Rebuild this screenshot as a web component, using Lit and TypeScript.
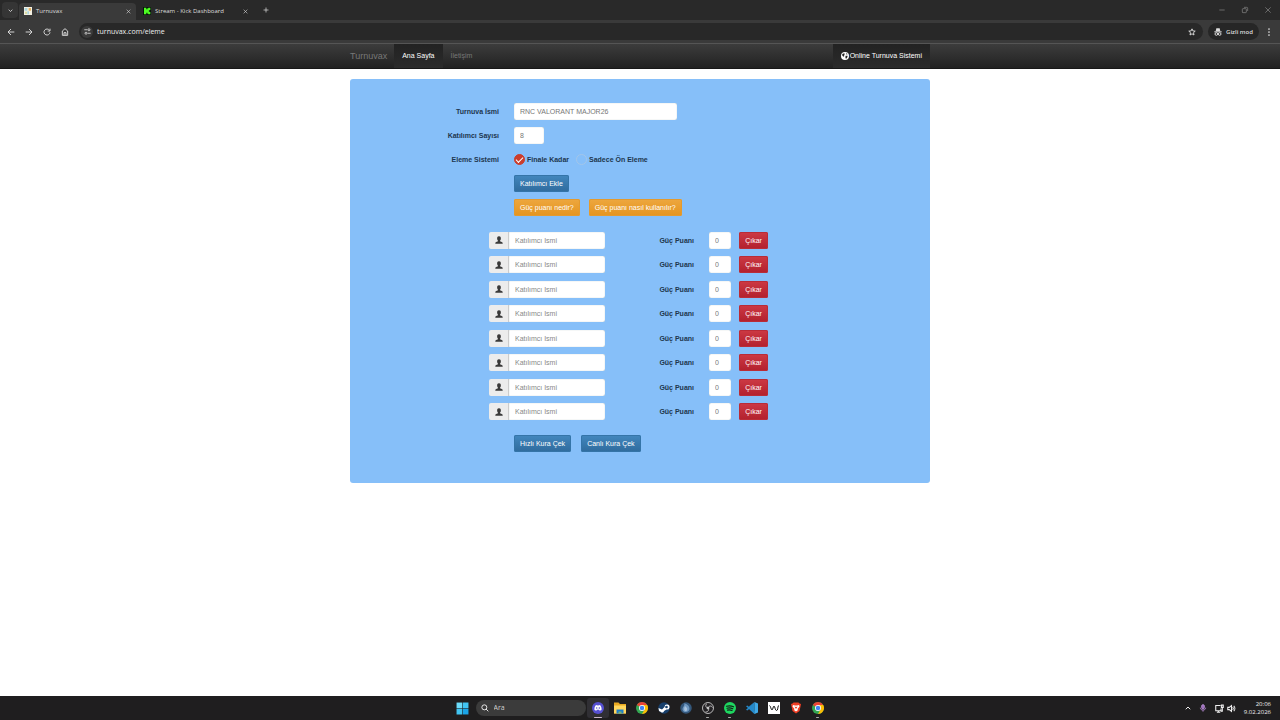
import { LitElement, html, css, svg } from "lit";
import { customElement, state } from "lit/decorators.js";

const icon = (body: unknown, size = 10, box = 24) =>
  html`<svg width=${size} height=${size} viewBox="0 0 ${box} ${box}" fill="none" stroke="currentColor" stroke-width="2.8" aria-hidden="true">${body}</svg>`;

const cross = svg`<path d="M3 3l18 18M21 3L3 21"/>`;
const thinCross = svg`<path stroke-width="2" d="M4 4l16 16M20 4L4 20"/>`;
const chevronDown = svg`<path stroke-width="4" d="M3 8l9 9 9-9"/>`;
const chevronUp = svg`<path stroke-width="4" d="M3 17l9-9 9 9"/>`;
const plus = svg`<path d="M12 2v20M2 12h20"/>`;
const back = svg`<path d="M22 12H4M12 3l-9 9 9 9"/>`;
const forward = svg`<path d="M2 12h18M12 3l9 9-9 9"/>`;
const reload = svg`<path d="M19.500 7a9 9 0 1 0 1.500 6M21 2v7h-7"/>`;
const home = svg`<path d="M4 9l8-7 8 7v13H4zM9 22v-8h6v8"/>`;
const tune = svg`<path d="M1 6h10M13 18h10"/><circle cx="17" cy="6" r="3.500"/><circle cx="7" cy="18" r="3.500"/>`;
const star = svg`<path d="M12 2.500l2.700 6.300 7 .6-5.300 4.600 1.600 7L12 17.300 6 21l1.600-7-5.300-4.600 7-.6z"/>`;
const incognito = svg`<g fill="currentColor" stroke="none"><path d="M7 1h10l2 9H5z"/><path d="M1 10h22v3H1z"/></g><circle cx="7" cy="18" r="4"/><circle cx="17" cy="18" r="4"/>`;
const dots = svg`<g fill="currentColor" stroke="none"><circle cx="12" cy="3" r="2.600"/><circle cx="12" cy="12" r="2.600"/><circle cx="12" cy="21" r="2.600"/></g>`;
const minimise = svg`<path stroke-width="2" d="M4 12h16"/>`;
const restore = svg`<rect stroke-width="2" x="4" y="8" width="12" height="12" rx="2"/><path stroke-width="2" d="M9 4h8a3 3 0 0 1 3 3v8"/>`;
const globe = svg`<circle cx="12" cy="12" r="12" fill="#fff" stroke="none"/><path d="M5 5c3 0 5-1 7 1l-3 3 1 3-3 2-4-5zM14 11l6 0-1 5-4 5-2-5zM15 3l5 3-3 2z" fill="#222" stroke="none"/>`;
const person = svg`<path d="M12 1c-5 0-6 4-5.500 8 .4 3 2 4 2.500 6-.3 2-7 2-8 5.500V23h22v-2.500c-1-3.500-7.700-3.500-8-5.500.5-2 2.100-3 2.500-6C18 5 17 1 12 1z" fill="#3a3a3a" stroke="none"/>`;
const search = svg`<circle cx="10" cy="10" r="7.500"/><path d="M15 15l7 7"/>`;
const mic = svg`<rect x="8" y="2" width="8" height="13" rx="4" fill="#9b6bbd" stroke="#b48ccc"/><path d="M4 11c0 10 16 10 16 0M12 19v4" stroke="#a97fc4"/>`;
const network = svg`<path d="M15 4H2v14h14v-6M5 22h9M9 18v4"/><path d="M17 3h5v6h-5zM19.500 9v10h-4"/>`;
const speaker = svg`<path d="M2 9v6h4l6 5V4L6 9z"/><path d="M15 8c2 2 2 6 0 8M18 5c4 4 4 10 0 14"/>`;

const favTurnuvax = svg`<g stroke="none"><path fill="#f3efe2" d="M0 0h24v24H0z"/><path fill="#a9d6df" d="M2 3h8v8H2zM10 13h5v9h-5z"/><path fill="#e8b35c" d="M14 3h7v8h-7z"/><path fill="#d9dca0" d="M3 14h6v7H3z"/></g>`;
const favKick = svg`<g stroke="none"><path fill="#06140a" d="M0 0h24v24H0z"/><path fill="#4dfb22" d="M3 2h7v5h3V4h3V2h6v7h-3v2h-2v2h2v2h3v7h-6v-2h-3v-3h-3v5H3z"/></g>`;

const windows = svg`<g stroke="none" fill="#41c4f2"><path d="M1 1h10.500v10.500H1z" fill="#6cdcfa"/><path d="M12.500 1H23v10.500H12.500zM1 12.500h10.500V23H1z"/><path d="M12.500 12.500H23V23H12.500z" fill="#1ba5e8"/></g>`;
const discord = svg`<g stroke="none"><circle cx="12" cy="12" r="12" fill="#5650d2"/><path fill="#fff" d="M7 7l3-1 .7 1h2.600L14 6l3 1c2 3 2.500 6 2 9l-3.500 1.500-1.300-2h-4.400l-1.300 2L5 16c-.5-3 0-6 2-9z"/><circle cx="9.400" cy="12" r="1.500" fill="#5650d2"/><circle cx="14.600" cy="12" r="1.500" fill="#5650d2"/></g>`;
const folder = svg`<g stroke="none"><path fill="#e9a921" d="M0 1h9l3 3h12v19H0z"/><path fill="#ffd75e" d="M0 7h24v16H0z"/><path fill="#1f7fc9" d="M5 23v-8h14v8z"/><path fill="#7fb46a" d="M9 19h6v4H9z"/></g>`;
const chrome = svg`<g stroke="none"><circle cx="12" cy="12" r="12" fill="#34a853"/><path fill="#ea4335" d="M12 12L1.600 6A12 12 0 0 1 22.400 6H12z"/><path fill="#fbbc04" d="M12 12V6h10.400A12 12 0 0 1 12 24l5.200-9z"/><circle cx="12" cy="12" r="6" fill="#fff"/><circle cx="12" cy="12" r="4.500" fill="#4285f4"/></g>`;
const steam = svg`<g stroke="none"><circle cx="12" cy="12" r="11.500" fill="#173f6b"/><path fill="#fff" d="M1 12l7 3 5-5a5 5 0 1 1 4 5l-5 3a3.500 3.500 0 0 1-6 2l-4-2z"/><circle cx="17" cy="10" r="2.700" fill="#173f6b"/></g>`;
const flame = svg`<g stroke="none"><circle cx="12" cy="12" r="11.500" fill="#34587c"/><path fill="#6f98c2" d="M9 2c3 3 10 3 10 12-1 8-13 8-14 1 0-5 4-6 4-13z"/><path fill="#a9c3dd" d="M10 8c4 3 6 6 3 10-5 1-6-4-3-10z"/></g>`;
const obs = svg`<g stroke="#c8c8c8" stroke-width="1.800"><circle cx="12" cy="12" r="11" fill="#252326"/><path d="M12 12c-5-1-6-6-2-9M12 12c2-5 7-5 9-1M12 12c3 4 0 8-5 8"/><circle cx="12" cy="12" r="2" fill="#c8c8c8"/></g>`;
const spotify = svg`<circle cx="12" cy="12" r="12" fill="#1ed760" stroke="none"/><path stroke="#142018" stroke-width="2.400" stroke-linecap="round" d="M5 8.500c5-1.500 10-1 14 1M6 12.500c4-1.200 8-.8 11.500 1M7 16.200c3-.9 6-.6 9 .9"/>`;
const vscode = svg`<g stroke="none"><path fill="#2489ca" d="M17 0L6.500 10 2.500 7 0 8.500 13 20l4 4v-6L5 9.500z"/><path fill="#2489ca" d="M17 24L6.500 14l-4 3L0 15.500 17 0v6z"/><path fill="#3fa9e8" d="M17 0l7 3v18l-7 3z"/></g>`;
const wave = svg`<path fill="#fff" stroke="none" d="M0 0h24v24H0z"/><path stroke="#111" stroke-width="2" d="M3 7c2 0 3 9 5 9s2-8 4-8 2 9 5 9 2-6 4-10"/>`;
const brave = svg`<g stroke="none"><path fill="#ef3e24" d="M7 1h10l2 2 3 1-1 5-2 9-7 5-7-5-2-9-1-5 3-1z"/><path fill="#fff" d="M6 6l4 1h4l4-1 1 3-4 5 1 2-4 3-4-3 1-2-4-5z"/><path fill="#ef3e24" d="M9 9l3 1 3-1-2 4h-2z"/></g>`;

const taskbarApps: { name: string; art: unknown; active?: boolean; open?: boolean }[] = [
  { name: "Discord", art: discord, active: true },
  { name: "Dosya Gezgini", art: folder },
  { name: "Chrome", art: chrome },
  { name: "Steam", art: steam },
  { name: "Oyun", art: flame },
  { name: "OBS", art: obs, open: true },
  { name: "Spotify", art: spotify, open: true },
  { name: "Visual Studio Code", art: vscode },
  { name: "Wave", art: wave },
  { name: "Brave", art: brave },
  { name: "Chrome Gizli", art: chrome, open: true },
];

const reset = css`
  * { box-sizing: border-box; }
  button, input { font: inherit; color: inherit; margin: 0; padding: 0; border: 0; background: none; }
  a { color: inherit; text-decoration: none; }
  svg { display: block; flex: none; }
`;

@customElement("browser-chrome")
class BrowserChrome extends LitElement {
  static styles = [reset, css`
    :host { display: block; background: #292929; color: #dedede; font: 6px/10px "Open Sans", sans-serif; }
    button { display: grid; place-items: center; }
    .tabs { display: flex; align-items: center; height: 20px; padding-left: 2px; }
    .list { width: 16px; height: 16px; border-radius: 4px; background: #353535; }
    .tab { display: flex; align-items: center; gap: 4px; width: 117px; height: 17px; padding: 0 5px; margin-top: 3px; border-radius: 4px 4px 0 0; }
    .tab.current { background: #3a3a3a; margin-left: 1px; }
    .tab svg { margin-bottom: 1px; }
    .tab .name { flex: 1; margin-bottom: 1px; }
    .tab:not(.current) { padding-left: 7px; }
    .new { margin-left: 6px; width: 14px; }
    .window { display: flex; gap: 15px; margin-left: auto; padding-right: 8px; color: #8d8d8d; }
    .toolbar { display: flex; align-items: center; height: 23px; padding: 0 7px; gap: 10px; background: #3a3a3a; }
    .address { display: flex; align-items: center; flex: 1; height: 17px; padding: 0 7px 0 2px; margin: 0 -5px 0 0; border-radius: 9px; background: #282828; gap: 4px; }
    .site { width: 12px; height: 12px; border-radius: 6px; background: #3b3b3b; }
    .url { flex: 1; min-width: 0; font-size: 7px; color: #eee; outline: none; }
    .private { display: flex; align-items: center; gap: 4px; height: 17px; padding: 0 6px; margin-right: -4px; border-radius: 9px; background: #262626; font-weight: 600; }
  `];
  render() {
    return html`
      <div class="tabs">
        <button class="list" aria-label="Sekmelerde ara">${icon(chevronDown, 5)}</button>
        <div class="tab current">${icon(favTurnuvax, 8)}<span class="name">Turnuvax</span><button aria-label="Kapat">${icon(cross, 5)}</button></div>
        <div class="tab">${icon(favKick, 8)}<span class="name">Stream - Kick Dashboard</span><button aria-label="Kapat">${icon(cross, 5)}</button></div>
        <button class="new" aria-label="Yeni sekme">${icon(plus, 6)}</button>
        <div class="window">
          <button aria-label="Küçült">${icon(minimise, 8)}</button>
          <button aria-label="Geri yükle">${icon(restore, 8)}</button>
          <button aria-label="Pencereyi kapat">${icon(thinCross, 8)}</button>
        </div>
      </div>
      <div class="toolbar">
        <button aria-label="Geri">${icon(back, 8)}</button>
        <button aria-label="İleri">${icon(forward, 8)}</button>
        <button aria-label="Yenile">${icon(reload, 8)}</button>
        <button aria-label="Ana sayfa">${icon(home, 8)}</button>
        <div class="address">
          <button class="site" aria-label="Site bilgileri">${icon(tune, 7)}</button>
          <input class="url" aria-label="Adres" value="turnuvax.com/eleme" />
          <button aria-label="Yer işareti">${icon(star, 8)}</button>
        </div>
        <div class="private">${icon(incognito, 8)}<span>Gizli mod</span></div>
        <button aria-label="Menü">${icon(dots, 8)}</button>
      </div>`;
  }
}

@customElement("site-nav")
class SiteNav extends LitElement {
  static styles = [reset, css`
    :host { display: block; background: linear-gradient(#3c3c3c, #222); border-top: 1px solid #555; border-bottom: 1px solid #181818; color: #777; font: 7px/24px "Liberation Sans", Arial, sans-serif; }
    nav { display: flex; width: 100%; max-width: 580px; height: 24px; margin: 0 auto; }
    .brand { font-size: 9px; padding-right: 7px; }
    .link { padding: 0 8px; }
    .link.current { background: linear-gradient(#222, #2b2b2b); color: #fff; }
    .system { display: flex; align-items: center; gap: 1px; margin-left: auto; }
  `];
  render() {
    return html`<nav>
      <a class="brand" href="#">Turnuvax</a>
      <a class="link current" href="#">Ana Sayfa</a>
      <a class="link" href="#">İletişim</a>
      <a class="link current system" href="#">${icon(globe, 8)}<span>Online Turnuva Sistemi</span></a>
    </nav>`;
  }
}

@customElement("tournament-form")
class TournamentForm extends LitElement {
  @state() count = 8;

  static styles = [reset, css`
    :host { display: block; width: 100%; max-width: 580px; margin: 10px auto; padding: 24px 0 31px; border-radius: 3px; background: #86bff9; color: #20364e; font: 7px/17px "Liberation Sans", Arial, sans-serif; }
    form { display: block; }
    label, .title { font-weight: bold; }
    .fields { display: grid; grid-template-columns: 149px 1fr; column-gap: 15px; row-gap: 7px; }
    .title { text-align: right; }
    .second { grid-column: 2; }
    .box { height: 17px; padding: 0 6px; border-radius: 2px; background: #fff; color: #777; box-shadow: inset 0 0 1px #9aa; }
    .box::placeholder { color: #888; opacity: 1; }
    .wide { width: 163px; }
    .short { width: 30px; }
    .choices { display: flex; align-items: center; gap: 7px; }
    .choice { display: flex; align-items: center; gap: 2px; }
    .radio { appearance: none; width: 11px; height: 11px; border-radius: 50%; border: 1px solid #a3c6ea; display: grid; place-items: center; }
    .radio:checked { background: #cb3d2c; border-color: #cb3d2c; }
    .radio:checked::before { content: ""; width: 6px; height: 3px; border: solid #fff; border-width: 0 0 1px 1px; rotate: -45deg; translate: 0 -1px; }
    .btn { height: 17px; padding: 0 6px; border-radius: 2px; color: #fff; white-space: nowrap; }
    .primary { background: linear-gradient(#4287be, #2f6b9d); box-shadow: inset 0 0 0 1px #3474a8; }
    .warning { background: linear-gradient(#eda73f, #e5941f); box-shadow: inset 0 0 0 1px #e39a2f; }
    .danger { background: linear-gradient(#cd3a44, #b2202d); box-shadow: inset 0 0 0 1px #b92c37; width: 29px; padding: 0; }
    .row { display: flex; gap: 9px; }
    .players { display: grid; grid-auto-rows: 1fr; height: 196px; margin: 12px 0 11px; padding: 0 0 0 139px; list-style: none; }
    .player { display: flex; align-items: center; }
    .addon { display: grid; place-items: center; width: 20px; height: 17px; border-radius: 2px 0 0 2px; background: #ececec; border-right: 1px solid #ccc; }
    .name { width: 96px; border-radius: 0 2px 2px 0; }
    .power { width: 89px; text-align: right; }
    .score { width: 22px; margin: 0 8px 0 15px; }
    .actions { display: flex; gap: 10px; padding-left: 164px; }
  `];
  render() {
    return html`<form @submit=${(e: Event) => e.preventDefault()}>
      <div class="fields">
        <label class="title" for="title">Turnuva İsmi</label>
        <input class="box wide" id="title" value="RNC VALORANT MAJOR26" />
        <label class="title" for="count">Katılımcı Sayısı</label>
        <input class="box short" id="count" .value=${String(this.count)} />
        <span class="title" id="system">Eleme Sistemi</span>
        <div class="choices" role="radiogroup" aria-labelledby="system">
          <label class="choice"><input class="radio" type="radio" name="system" checked />Finale Kadar</label>
          <label class="choice"><input class="radio" type="radio" name="system" />Sadece Ön Eleme</label>
        </div>
        <div class="second row"><button class="btn primary" type="button" @click=${() => this.count++}>Katılımcı Ekle</button></div>
        <div class="second row">
          <button class="btn warning" type="button">Güç puanı nedir?</button>
          <button class="btn warning" type="button">Güç puanı nasıl kullanılır?</button>
        </div>
      </div>
      <ul class="players">
        ${Array.from({ length: this.count }, (_, i) => html`<li class="player">
          <span class="addon">${icon(person, 8)}</span>
          <input class="box name" placeholder="Katılımcı İsmi" aria-label="Katılımcı İsmi" />
          <label class="power" for="score${i}">Güç Puanı</label>
          <input class="box score" id="score${i}" value="0" />
          <button class="btn danger" type="button" @click=${() => this.count--}>Çıkar</button>
        </li>`)}
      </ul>
      <div class="actions">
        <button class="btn primary" type="button">Hızlı Kura Çek</button>
        <button class="btn primary" type="button">Canlı Kura Çek</button>
      </div>
    </form>`;
  }
}

@customElement("task-bar")
class TaskBar extends LitElement {
  static styles = [reset, css`
    :host { display: grid; grid-template-columns: 1fr auto 1fr; align-items: center; height: 24px; background: #1f1e1f; color: #f0f0f0; font: 6px/8px "Open Sans", sans-serif; }
    .apps { grid-column: 2; display: flex; align-items: center; }
    .app { display: grid; place-items: center; position: relative; width: 22px; height: 20px; border-radius: 3px; }
    .app.active { background: #302f34; }
    .app.open::after, .app.active::after { content: ""; position: absolute; bottom: 0; width: 3px; height: 1px; border-radius: 1px; background: #aaa; }
    .app.active::after { width: 8px; background: #c8b5c8; }
    .search { display: flex; align-items: center; gap: 5px; width: 110px; height: 16px; padding: 0 5px; margin: 0 1px 0 2px; border-radius: 8px; background: #3b3b3b; }
    .query { width: 80px; font-size: 7px; outline: none; }
    .query::placeholder { color: #d0d0d0; opacity: 1; }
    .tray { display: flex; align-items: center; justify-content: flex-end; gap: 8px; padding-right: 9px; }
    .pair { display: flex; gap: 3px; }
    .clock { text-align: right; }
    .clock div { white-space: nowrap; }
  `];
  render() {
    return html`
      <div class="apps">
        <button class="app" aria-label="Başlat">${icon(windows, 13)}</button>
        <label class="search">${icon(search, 8)}<input class="query" placeholder="Ara" aria-label="Ara" /></label>
        ${taskbarApps.map(a => html`<button class="app ${a.active ? "active" : ""} ${a.open ? "open" : ""}" aria-label=${a.name}>${icon(a.art, 12)}</button>`)}
      </div>
      <div class="tray">
        ${icon(chevronUp, 6)}${icon(mic, 8)}
        <span class="pair">${icon(network, 9)}${icon(speaker, 9)}</span>
        <div class="clock"><div>20:06</div><div>9.02.2026</div></div>
      </div>`;
  }
}

@customElement("app-root")
class AppRoot extends LitElement {
  static styles = css`
    :host { display: flex; flex-direction: column; min-height: 100vh; background: #fff; }
    .page { flex: 1; }
  `;
  render() {
    return html`
      <browser-chrome></browser-chrome>
      <site-nav></site-nav>
      <main class="page"><tournament-form></tournament-form></main>
      <task-bar></task-bar>`;
  }
}
